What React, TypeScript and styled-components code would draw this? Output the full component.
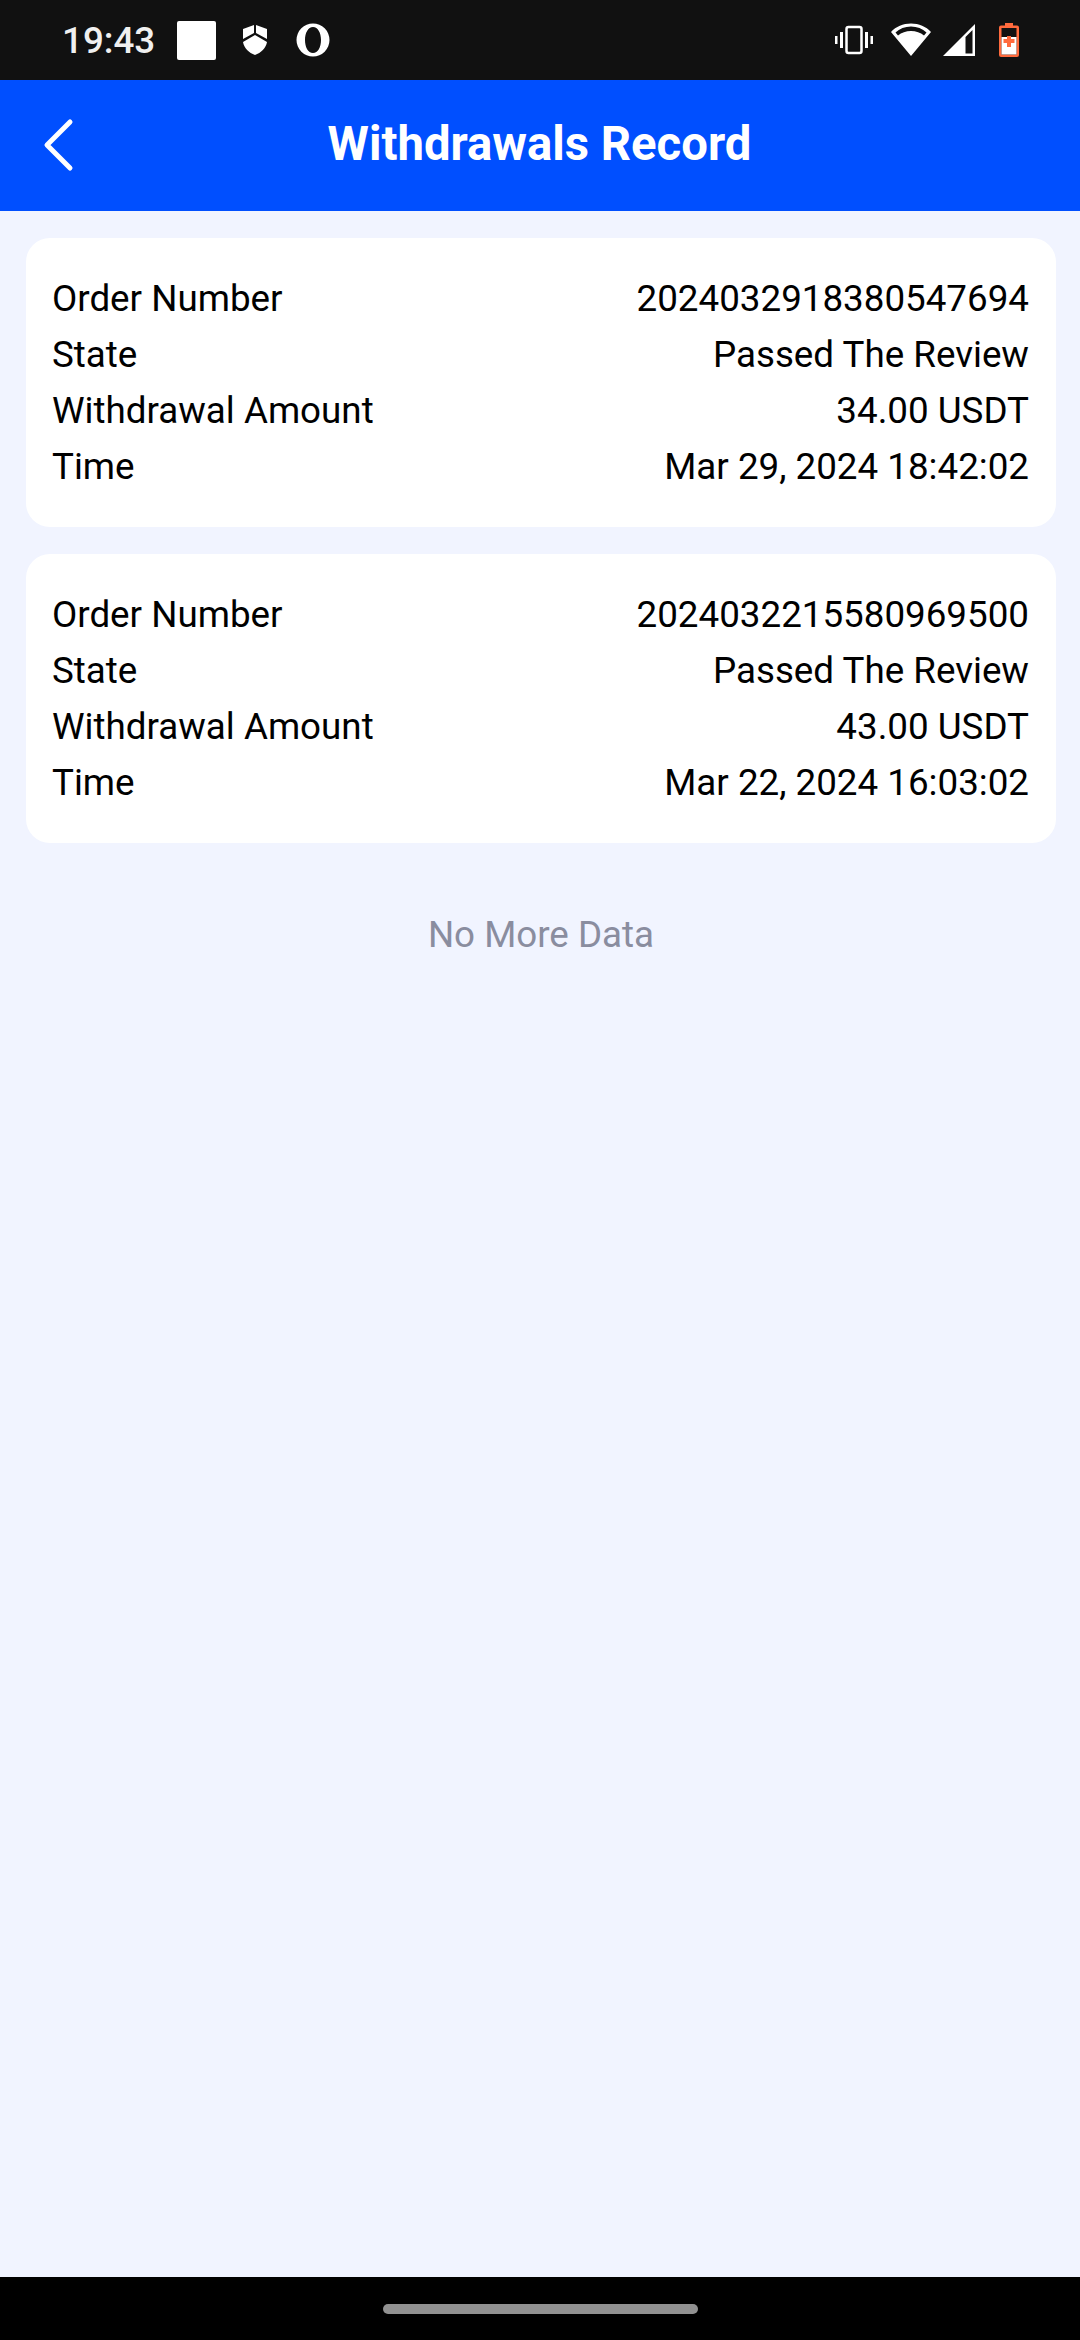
import styled, { createGlobalStyle } from 'styled-components'

const GlobalStyle = createGlobalStyle`
  html, body {
    margin: 0;
    padding: 0;
    background: #f1f4ff;
    font-family: Roboto, "Liberation Sans", sans-serif;
  }
`

const Screen = styled.div`
  width: 1080px;
  height: 2340px;
  display: flex;
  flex-direction: column;
  overflow: hidden;
  background: #f1f4ff;
`

const StatusBar = styled.div`
  height: 80px;
  flex: none;
  background: #111111;
  display: flex;
  align-items: center;
  justify-content: space-between;
  padding: 0 61px 0 62px;
  box-sizing: border-box;
`

const StatusGroup = styled.div`
  display: flex;
  align-items: center;
`

const Clock = styled.span`
  width: 91px;
  font-size: 36.75px;
  font-weight: 500;
  color: #f0f0f0;
  margin-right: 24px;
`

const NotifySquare = styled.div`
  width: 39px;
  height: 39px;
  border-radius: 2px;
  background: #ffffff;
  margin-right: 26px;
`

const Header = styled.header`
  height: 131px;
  flex: none;
  background: #004fff;
  display: flex;
  align-items: center;
  justify-content: center;
  position: relative;
`

const BackButton = styled.button`
  position: absolute;
  left: 40px;
  top: 38px;
  width: 40px;
  height: 54px;
  padding: 0;
  border: 0;
  background: none;
  display: flex;
`

const Title = styled.h1`
  margin: 0 0 4px -1px;
  font-size: 47.25px;
  font-weight: 700;
  color: #ffffff;
`

const List = styled.main`
  flex: 1;
  display: flex;
  flex-direction: column;
  gap: 27px;
  padding: 27px 24px 0 26px;
`

const Card = styled.section`
  background: #ffffff;
  border-radius: 24px;
  padding: 0 27px 0 26px;
  height: 289px;
  box-sizing: border-box;
  display: flex;
  flex-direction: column;
  justify-content: center;
`

const Row = styled.div`
  display: flex;
  justify-content: space-between;
  align-items: center;
  height: 56.2px;
  font-size: 36.75px;
  color: #000000;
`

const Footer = styled.p`
  margin: 37px 0 0;
  text-align: center;
  font-size: 36.75px;
  line-height: 56px;
  color: #8a8d9f;
`

const NavBar = styled.div`
  height: 63px;
  flex: none;
  background: #000000;
  display: flex;
  justify-content: center;
  padding-top: 27px;
  box-sizing: border-box;
`

const NavPill = styled.div`
  width: 315px;
  height: 10px;
  border-radius: 5px;
  background: #919191;
`

const records = [
  { order: '2024032918380547694', amount: '34.00 USDT', time: 'Mar 29, 2024 18:42:02' },
  { order: '2024032215580969500', amount: '43.00 USDT', time: 'Mar 22, 2024 16:03:02' },
]

export default function App() {
  return (
    <>
      <GlobalStyle />
      <Screen>
        <StatusBar>
          <StatusGroup>
            <Clock>19:43</Clock>
            <NotifySquare />
            <svg width="26" height="32" viewBox="0 0 26 32" style={{ marginRight: 28 }}>
              <path d="M1 5 L12 1 V9 L1 15 Z M14 1 L25 5 V15 L14 9 Z M1 18 L13 11 L25 18 C24 24 19 29 13 31 C7 29 2 24 1 18 Z" fill="#fff" />
            </svg>
            <svg width="34" height="34" viewBox="0 0 34 34">
              <path fillRule="evenodd" d="M17 0.5 A16.5 16.5 0 1 0 17 33.5 A16.5 16.5 0 1 0 17 0.5 Z M17 4 C22 4 25 10 25 17 C25 24 22 30 17 30 C12 30 9 24 9 17 C9 10 12 4 17 4 Z" fill="#fff" />
            </svg>
          </StatusGroup>
          <StatusGroup>
            <svg width="38" height="30" viewBox="0 0 38 30" style={{ marginRight: 18 }}>
              <rect x="11.5" y="2" width="15" height="26" rx="2" fill="none" stroke="#fff" strokeWidth="2.5" />
              <path d="M5 7 H8 V23 H5 Z M30 7 H33 V23 H30 Z M0 11 H2.5 V19 H0 Z M35.5 11 H38 V19 H35.5 Z" fill="#fff" />
            </svg>
            <svg width="40" height="34" viewBox="0 0 40 34" style={{ marginRight: 12 }}>
              <path fillRule="evenodd" d="M20 33 L0 9 C5 3.5 12 0.5 20 0.5 C28 0.5 35 3.5 40 9 Z M4.5 9.5 L7 12.5 C10.5 9.5 15 8 20 8 C25 8 29.5 9.5 33 12.5 L35.5 9.5 C31.5 5.5 26 3.5 20 3.5 C14 3.5 8.5 5.5 4.5 9.5 Z" fill="#fff" />
            </svg>
            <svg width="32" height="32" viewBox="0 0 32 32" style={{ marginRight: 24 }}>
              <path fillRule="evenodd" d="M32 0 V32 H0 Z M29.5 6 L22.5 13 V29.5 H29.5 Z" fill="#fff" />
            </svg>
            <svg width="20" height="34" viewBox="0 0 20 34">
              <path d="M6 0 H14 V2.5 H18 A2 2 0 0 1 20 4.5 V32 A2 2 0 0 1 18 34 H2 A2 2 0 0 1 0 32 V4.5 A2 2 0 0 1 2 2.5 H6 Z" fill="#ff6a3d" />
              <rect x="2.5" y="5" width="15" height="26.5" fill="#111" />
              <rect x="2.5" y="14" width="15" height="17.5" fill="#fff" />
              <path d="M8 13 H12 V16 H15.5 V20 H12 V24 H8 V20 H4.5 V16 H8 Z" fill="#ff6a3d" />
            </svg>
          </StatusGroup>
        </StatusBar>
        <Header>
          <BackButton aria-label="Back">
            <svg width="40" height="54" viewBox="0 0 40 54">
              <path d="M30 6 L7 29 L30 52" transform="translate(0 -2)" fill="none" stroke="#fff" strokeWidth="5" strokeLinecap="round" strokeLinejoin="round" />
            </svg>
          </BackButton>
          <Title>Withdrawals Record</Title>
        </Header>
        <List>
          {records.map((r) => (
            <Card key={r.order}>
              <Row>
                <span>Order Number</span>
                <span>{r.order}</span>
              </Row>
              <Row>
                <span>State</span>
                <span>Passed The Review</span>
              </Row>
              <Row>
                <span>Withdrawal Amount</span>
                <span>{r.amount}</span>
              </Row>
              <Row>
                <span>Time</span>
                <span>{r.time}</span>
              </Row>
            </Card>
          ))}
          <Footer>No More Data</Footer>
        </List>
        <NavBar>
          <NavPill />
        </NavBar>
      </Screen>
    </>
  )
}
